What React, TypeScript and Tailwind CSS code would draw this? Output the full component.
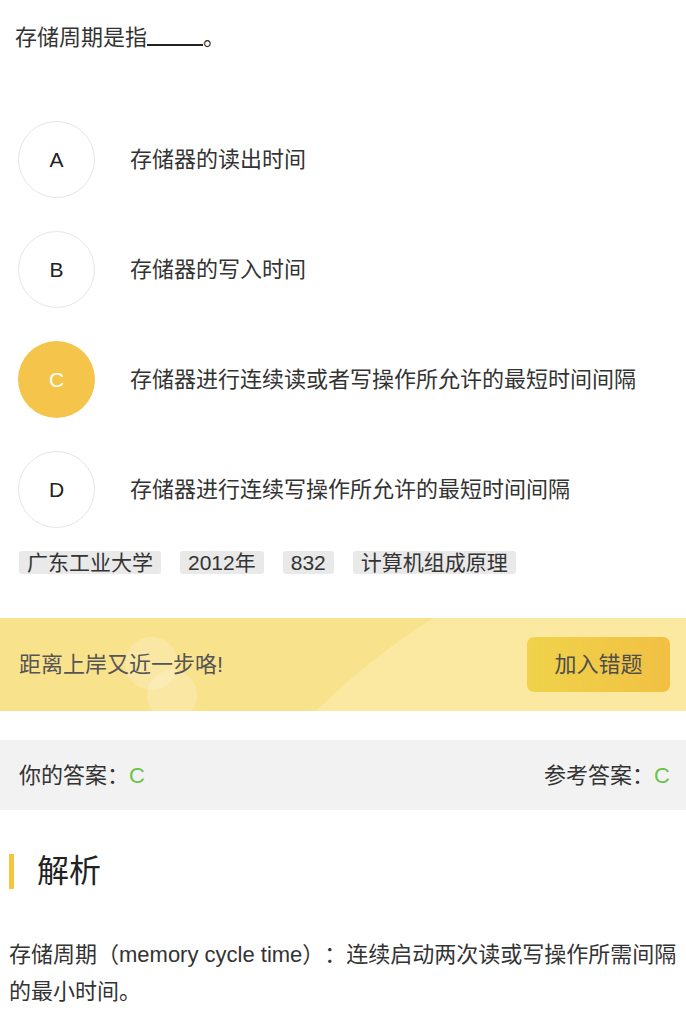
import React from "react";

const FONT = { fontFamily: '"Liberation Sans", "Noto Sans CJK SC", sans-serif' };

const options = [
  { key: "A", text: "存储器的读出时间" },
  { key: "B", text: "存储器的写入时间" },
  { key: "C", text: "存储器进行连续读或者写操作所允许的最短时间间隔" },
  { key: "D", text: "存储器进行连续写操作所允许的最短时间间隔" },
];

const tags = ["广东工业大学", "2012年", "832", "计算机组成原理"];

const selected = "C";

export default function App() {
  return (
    <div className="w-[686px] min-h-[1024px] bg-white text-[#333] [text-spacing-trim:space-all]" style={FONT}>
      {/* Question */}
      <div className="px-[15px] pt-[23px] text-[22px] leading-[30px]">
        存储周期是指
        <span className="inline-block w-[56px] border-b-2 border-[#222] align-baseline translate-y-[1px]"></span>
        。
      </div>

      {/* Options */}
      <div className="mt-[68px] flex flex-col gap-[33px] pl-[18px]">
        {options.map((o) => {
          const active = o.key === selected;
          return (
            <div key={o.key} className="flex items-center gap-[35px]">
              <div
                className={
                  active
                    ? "w-[77px] h-[77px] shrink-0 rounded-full bg-[#f4c54a] text-white flex items-center justify-center text-[21px]"
                    : "w-[77px] h-[77px] shrink-0 rounded-full border border-[#e6e6e6] text-[#222] flex items-center justify-center text-[21px]"
                }
              >
                {o.key}
              </div>
              <div className="text-[22px] leading-[30px] text-[#333]">{o.text}</div>
            </div>
          );
        })}
      </div>

      {/* Tags */}
      <div className="mt-[23px] flex gap-[19px] pl-[19px]">
        {tags.map((t) => (
          <span
            key={t}
            className="h-[23px] px-[8px] rounded-[3px] bg-[#e9e9ea] text-[21px] leading-[23px] text-[#333]"
          >
            {t}
          </span>
        ))}
      </div>

      {/* Banner */}
      <div className="relative mt-[44px] h-[93px] overflow-hidden bg-[#f9e28c] flex items-center justify-between pl-[19px] pr-[16px]">
        <div className="absolute left-[112px] top-[-106px] w-[1376px] h-[1376px] rounded-full bg-[#fbeaa6]/80"></div>
        <div className="absolute left-[125px] top-[19px] w-[53px] h-[53px] rounded-full bg-white/20"></div>
        <div className="absolute left-[147px] top-[52px] w-[50px] h-[50px] rounded-full bg-white/20"></div>
        <span className="relative text-[22px] text-[#555]">距离上岸又近一步咯!</span>
        <button className="relative w-[143px] h-[55px] rounded-[7px] bg-gradient-to-r from-[#efd34a] to-[#f2c043] text-[22px] text-[#4d4d4d]">
          加入错题
        </button>
      </div>

      {/* Answers */}
      <div className="mt-[29px] h-[70px] bg-[#f2f2f2] flex items-center justify-between pl-[19px] pr-[16px] text-[22px]">
        <span className="text-[#333]">
          你的答案：<span className="text-[#6cc24a]">C</span>
        </span>
        <span className="text-[#333]">
          参考答案：<span className="text-[#6cc24a]">C</span>
        </span>
      </div>

      {/* Analysis heading */}
      <div className="mt-[41px] flex items-center pl-[9px]">
        <div className="w-[5px] h-[35px] bg-[#f5c542]"></div>
        <h2 className="ml-[23px] text-[32px] leading-[40px] text-[#222]">解析</h2>
      </div>

      {/* Analysis body */}
      <p className="mt-[45px] pl-[9px] pr-0 text-[22px] leading-[37px] text-[#333] whitespace-nowrap">
        存储周期（memory cycle time）：连续启动两次读或写操作所需间隔
        <br />
        的最小时间。
      </p>
    </div>
  );
}
